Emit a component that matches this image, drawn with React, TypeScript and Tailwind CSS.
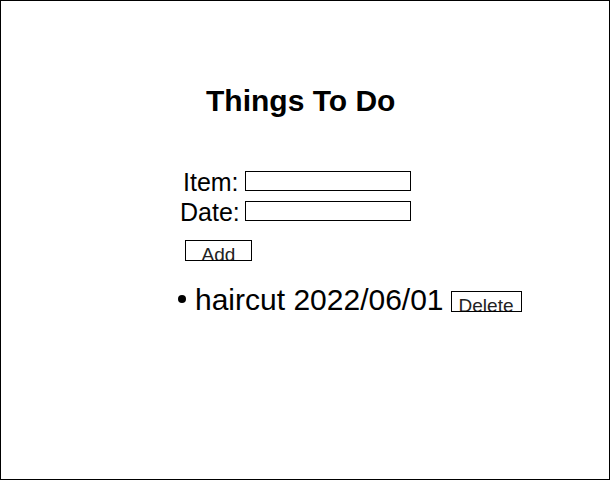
import React, { useState } from "react";

type Todo = { id: number; item: string; date: string };

const App = () => {
  const [item, setItem] = useState("");
  const [date, setDate] = useState("");
  const [todos, setTodos] = useState<Todo[]>([
    { id: 1, item: "haircut", date: "2022/06/01" },
  ]);

  const handleAdd = () => {
    if (!item) return;
    setTodos((prev) => [...prev, { id: Date.now(), item, date }]);
    setItem("");
    setDate("");
  };

  const handleDelete = (id: number) => {
    setTodos((prev) => prev.filter((t) => t.id !== id));
  };

  return (
    <div className="w-[610px] h-[480px] border border-black bg-white text-black font-['Liberation_Sans',Arial,sans-serif] pt-[83px]">
      <h1 className="pl-[205px] text-[30px] leading-[34px] font-bold">
        Things To Do
      </h1>

      {/* form */}
      <div className="mt-[49px] flex flex-col">
        <div className="flex h-[30px] items-start pl-[182px]">
          <span className="w-[62px] text-[25px] leading-[30px]">Item:</span>
          <input
            value={item}
            onChange={(e) => setItem(e.target.value)}
            className="mt-[4px] w-[166px] h-[20px] border border-black outline-none px-1 text-[14px]"
          />
        </div>
        <div className="flex h-[30px] items-start pl-[179px]">
          <span className="w-[65px] text-[25px] leading-[30px]">Date:</span>
          <input
            value={date}
            onChange={(e) => setDate(e.target.value)}
            className="mt-[4px] w-[166px] h-[20px] border border-black outline-none px-1 text-[14px]"
          />
        </div>
      </div>

      <div className="mt-[13px] pl-[184px]">
        <button
          onClick={handleAdd}
          className="block w-[67px] h-[21px] border border-black overflow-hidden text-center text-[19px] leading-[20px] pt-[4px] text-[#222]"
        >
          Add
        </button>
      </div>

      {/* list */}
      <ul className="mt-[22px]">
        {todos.map((t) => (
          <li key={t.id} className="flex items-start pl-[177px]">
            <span className="mt-[12px] w-[8px] h-[8px] rounded-full bg-black shrink-0" />
            <span className="ml-[9px] text-[30px] leading-[34px] whitespace-nowrap">
              {t.item} {t.date}
            </span>
            <button
              onClick={() => handleDelete(t.id)}
              className="ml-[7px] mt-[8px] block w-[71px] h-[21px] border border-black overflow-hidden text-center text-[19px] leading-[20px] pt-[4px] text-[#222]"
            >
              Delete
            </button>
          </li>
        ))}
      </ul>
    </div>
  );
};

export default App;
